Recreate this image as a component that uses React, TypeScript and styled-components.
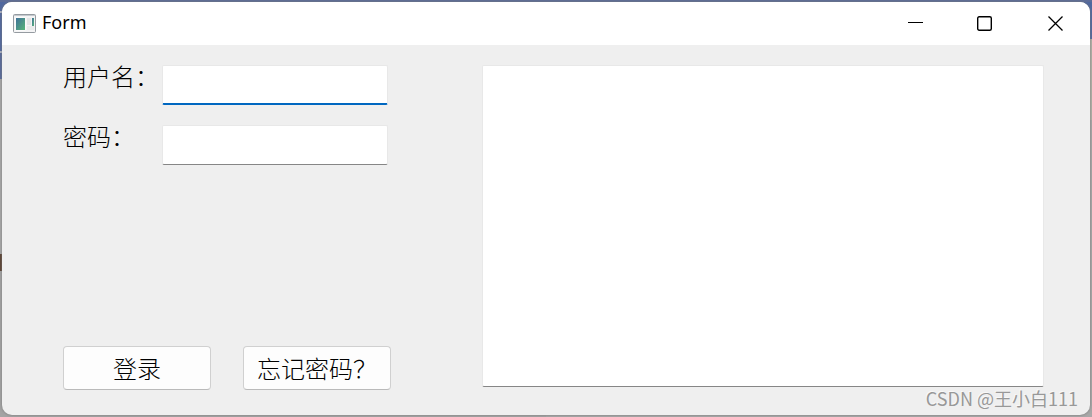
import React from "react";
import styled, { createGlobalStyle, css } from "styled-components";

const GlobalStyle = createGlobalStyle`
  *, *::before, *::after { box-sizing: border-box; }
  body { margin: 0; }
`;

const Desktop = styled.div`
  display: flex;
  min-height: 100vh;
  padding: 2px;
  background:
    linear-gradient(#5c6c98, #5c6c98) top / 100% 2px no-repeat,
    linear-gradient(#5068a0 0 39px, #b4b2a8 39px 120px, #a8a8a8 120px) right / 50% 100% no-repeat,
    linear-gradient(#5068a0 0 11px, #b0b6c8 11px 13px, #5068a0 13px 51px, #b0b6c8 51px 53px, #56699c 53px 79px, #a9a9a9 79px 254px, #5a4030 254px 271px, #a4a4a4 271px) left / 50% 100% no-repeat;
`;

const Window = styled.main`
  flex: 1;
  display: flex;
  flex-direction: column;
  overflow: hidden;
  border-radius: 10px;
  background: #efefef;
  box-shadow: 0 0 3px #777777;
  font-family: "Noto Sans CJK SC", sans-serif;
  color: #000000;
`;

const TitleBar = styled.header`
  display: flex;
  align-items: center;
  height: 43px;
  padding-left: 11px;
  background: #ffffff;
`;

const Title = styled.h1`
  flex: 1;
  margin: 0 0 0 6px;
  padding-bottom: 3px;
  font: 400 18px/24px "Noto Sans", sans-serif;
`;

const CaptionButton = styled.button`
  display: grid;
  place-items: center;
  width: 70px;
  height: 43px;
  padding: 0;
  border: 0;
  background: transparent;
`;

const Content = styled.div`
  flex: 1;
  display: flex;
  gap: 91px;
  padding: 20px 46px 0 61px;
`;

const LoginForm = styled.form`
  flex: 0 0 328px;
  display: flex;
  flex-direction: column;
  gap: 20px;
  padding-bottom: 25px;
`;

const Field = styled.div`
  display: flex;
`;

const Label = styled.label`
  width: 99px;
  font-size: 24px;
  line-height: 22px;
  font-weight: 300;
  white-space: nowrap;
`;

const surface = css`
  border: 1px solid #e8e8e8;
  border-bottom-color: #868686;
  border-radius: 2px;
  background: #ffffff;
  outline: none;
  font: 300 24px/32px "Noto Sans CJK SC", sans-serif;
`;

const TextInput = styled.input<{ $active?: boolean }>`
  ${surface}
  width: 226px;
  height: 40px;
  padding: 0 6px;
  ${({ $active }) => $active && css`border-bottom: 2px solid #0067c0;`}
`;

const Actions = styled.div`
  display: flex;
  gap: 32px;
  margin-top: auto;
`;

const Button = styled.button`
  width: 148px;
  height: 44px;
  padding: 0;
  border: 1px solid #d0d0d0;
  border-bottom-color: #bababa;
  border-radius: 4px;
  background: #fdfdfd;
  color: #000000;
  font: 300 24px/32px "Noto Sans CJK SC", sans-serif;
  white-space: nowrap;
`;

const Side = styled.section`
  flex: 1;
  display: flex;
  flex-direction: column;
  min-width: 0;
`;

const Output = styled.textarea`
  ${surface}
  flex: 1;
  width: 100%;
  min-height: 120px;
  padding: 6px;
  resize: none;
`;

const Credit = styled.p`
  align-self: flex-end;
  margin: 0 -34px 6px 0;
  font-size: 18px;
  line-height: 22px;
  font-weight: 400;
  color: #989898;
  text-shadow: -1px -1px 0 #f8f8f8;
  white-space: nowrap;
`;

const AppIcon = () => (
  <svg width="23" height="19" viewBox="0 0 23 19" aria-hidden="true">
    <defs>
      <linearGradient id="pane" x1="0" y1="0" x2="1" y2="1">
        <stop offset="0" stopColor="#3f7199" />
        <stop offset="1" stopColor="#57b578" />
      </linearGradient>
    </defs>
    <rect x="0.5" y="0.5" width="22" height="18" rx="1" fill="#f4f4f5" stroke="#959ba1" />
    <path d="M1 1.5h21" stroke="#c4c9ce" />
    <rect x="2.5" y="3.5" width="10" height="13" fill="#ffffff" />
    <rect x="3" y="4" width="9" height="12" fill="url(#pane)" />
    <rect x="14" y="4" width="4" height="7" fill="#e3e5e6" />
    <rect x="19" y="4" width="2" height="8" fill="url(#pane)" />
    <rect x="14" y="12" width="7" height="4" fill="#e9eaea" />
  </svg>
);

export default function App() {
  return (
    <>
      <GlobalStyle />
      <Desktop>
        <Window>
          <TitleBar>
            <AppIcon />
            <Title>Form</Title>
            <CaptionButton type="button" aria-label="Minimize">
              <svg width="15" height="15" viewBox="0 0 15 15"><path d="M0 6.5h15" stroke="#000" /></svg>
            </CaptionButton>
            <CaptionButton type="button" aria-label="Maximize">
              <svg width="16" height="15" viewBox="0 0 16 15">
                <rect x="0.7" y="0.7" width="13.6" height="13.6" rx="1.5" fill="none" stroke="#000" strokeWidth="1.4" />
              </svg>
            </CaptionButton>
            <CaptionButton type="button" aria-label="Close">
              <svg width="15" height="15" viewBox="0 0 15 15">
                <path d="M0.5 0.5l14 14M14.5 0.5l-14 14" stroke="#000" strokeWidth="1.3" />
              </svg>
            </CaptionButton>
          </TitleBar>
          <Content>
            <LoginForm onSubmit={(e: React.FormEvent) => e.preventDefault()}>
              <Field>
                <Label htmlFor="username">用户名：</Label>
                <TextInput id="username" $active />
              </Field>
              <Field>
                <Label htmlFor="password">密码：</Label>
                <TextInput id="password" type="password" />
              </Field>
              <Actions>
                <Button type="submit">登录</Button>
                <Button type="button">忘记密码？</Button>
              </Actions>
            </LoginForm>
            <Side>
              <Output aria-label="Output" />
              <Credit>CSDN @王小白111</Credit>
            </Side>
          </Content>
        </Window>
      </Desktop>
    </>
  );
}
